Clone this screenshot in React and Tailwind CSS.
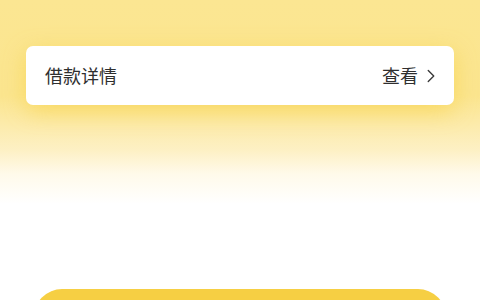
import { ChevronRight } from 'lucide-react'

function App() {
  return (
    <div
      className="h-[300px] w-[480px] overflow-hidden bg-[linear-gradient(180deg,#fbe692_0%,#fbe58f_32%,#fdf0c4_50%,#fffaea_58%,#ffffff_68%)]"
      style={{ fontFamily: '"Noto Sans CJK SC", "Noto Sans", sans-serif' }}
    >
      <div className="px-[26px] pt-[46px]">
        <div className="flex h-[59px] items-center justify-between rounded-[7px] bg-white pl-[19px] pr-[12px] shadow-[0_6px_22px_rgba(248,212,80,0.75)]">
          <span className="text-[18px] text-[#2f2f2f]">借款详情</span>
          <span className="flex items-center gap-[2px] text-[18px] text-[#2f2f2f]">
            查看
            <ChevronRight size={22} strokeWidth={1.5} className="text-[#3a3a3a]" />
          </span>
        </div>
      </div>
      <div className="px-[34px] pt-[184px]">
        <button type="button" className="h-[56px] w-full rounded-full bg-[#f6cf43]" />
      </div>
    </div>
  )
}

export default App
